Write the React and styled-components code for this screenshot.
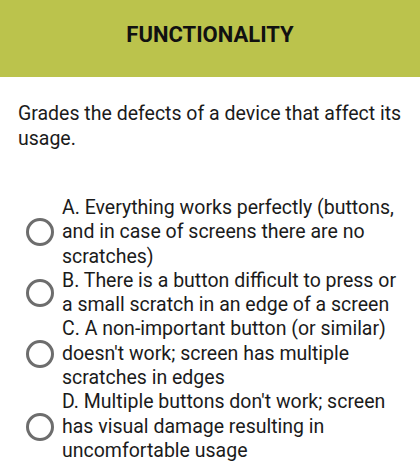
import React from 'react'
import styled, { createGlobalStyle } from 'styled-components'

const GlobalStyle = createGlobalStyle`
    body{
        margin: 0;
        background-color: #fff;
        font-family: Roboto, "Noto Sans", sans-serif;
        color: #1b1b1b;
    }
`

const options = [
    "A. Everything works perfectly (buttons, and in case of screens there are no scratches)",
    "B. There is a button difficult to press or a small scratch in an edge of a screen",
    "C. A non-important button (or similar) doesn't work; screen has multiple scratches in edges",
    "D. Multiple buttons don't work; screen has visual damage resulting in uncomfortable usage",
]

const App = () => {
    return (
        <Wrapper>
            <GlobalStyle />
            <Header>
                <Title>FUNCTIONALITY</Title>
            </Header>
            <Description>Grades the defects of a device that affect its usage.</Description>
            <OptionList>
                {options.map((text, index) => {
                    return (
                        <Option key={index}>
                            <Radio />
                            <OptionText>{text}</OptionText>
                        </Option>
                    )
                })}
            </OptionList>
        </Wrapper>
    )
}

export default App

const Wrapper = styled.div`
    width: 420px;
    height: 470px;
    overflow: hidden;
`

const Header = styled.div`
    height: 77px;
    background-color: #bbc34c;
    display: flex;
    justify-content: center;
    padding-top: 22px;
    box-sizing: border-box;
`

const Title = styled.h1`
    margin: 0;
    font-size: 22px;
    font-weight: 700;
    color: #111;
    line-height: 26px;
`

const Description = styled.p`
    margin: 24px 18px 0 18px;
    font-size: 19.5px;
    line-height: 25px;
    color: #1b1b1b;
`

const OptionList = styled.div`
    margin-top: 45px;
    display: flex;
    flex-direction: column;
`

const Option = styled.div`
    display: flex;
    align-items: center;
    padding-left: 26px;
`

const Radio = styled.span`
    width: 22px;
    height: 22px;
    border: 3px solid #6d6d6d;
    border-radius: 50%;
    flex-shrink: 0;
    margin-right: 8px;
`

const OptionText = styled.div`
    font-size: 19.5px;
    line-height: 24.3px;
    padding-right: 20px;
`
